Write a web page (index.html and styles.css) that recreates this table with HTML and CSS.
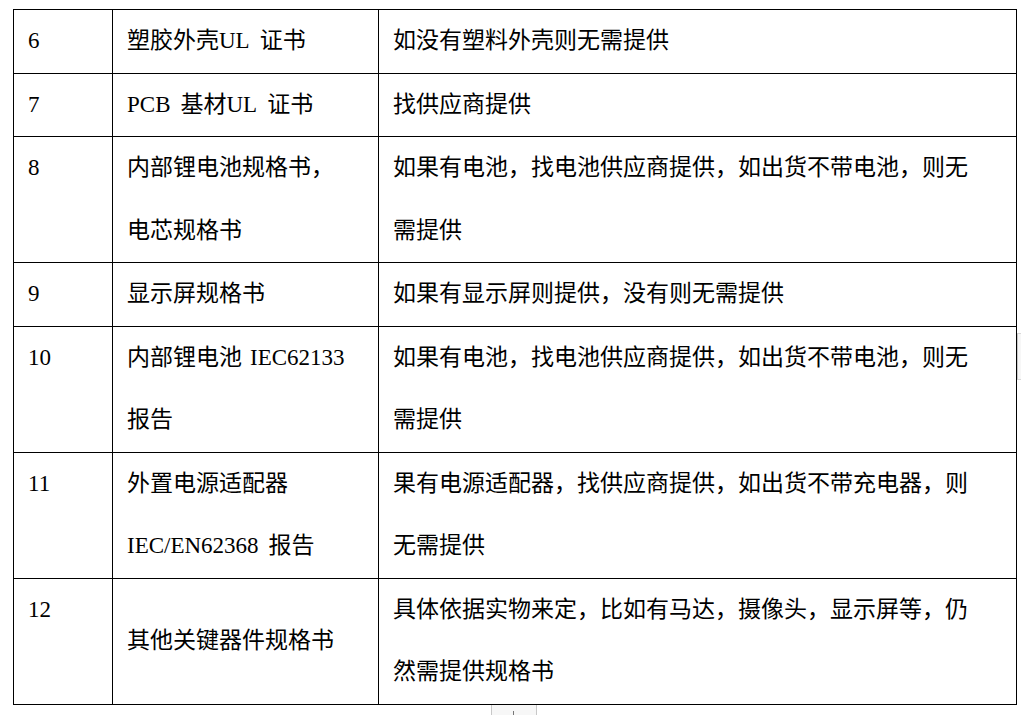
FILE: index.html
```html
<!DOCTYPE html>
<html lang="zh">
<head>
<meta charset="utf-8">
<link rel="stylesheet" href="styles.css">
</head>
<body>
<table class="doc">
  <colgroup>
    <col class="c1"><col class="c2"><col class="c3">
  </colgroup>
  <tr>
    <td>6</td>
    <td>塑胶外壳UL<span class="sp"></span>证书</td>
    <td>如没有塑料外壳则无需提供</td>
  </tr>
  <tr>
    <td>7</td>
    <td>PCB<span class="sp"></span>基材UL<span class="sp"></span>证书</td>
    <td>找供应商提供</td>
  </tr>
  <tr>
    <td>8</td>
    <td><div>内部锂电池规格书，</div><div>电芯规格书</div></td>
    <td><div class="jl">如果有电池，找电池供应商提供，如出货不带电池，则无</div><div>需提供</div></td>
  </tr>
  <tr>
    <td>9</td>
    <td>显示屏规格书</td>
    <td>如果有显示屏则提供，没有则无需提供</td>
  </tr>
  <tr>
    <td>10</td>
    <td><div>内部锂电池<span class="gap"></span>IEC62133</div><div>报告</div></td>
    <td><div class="jl">如果有电池，找电池供应商提供，如出货不带电池，则无</div><div>需提供</div></td>
  </tr>
  <tr>
    <td>11</td>
    <td><div>外置电源适配器</div><div>IEC/EN62368<span class="sp"></span>报告</div></td>
    <td><div class="jl">果有电源适配器，找供应商提供，如出货不带充电器，则</div><div>无需提供</div></td>
  </tr>
  <tr>
    <td>12</td>
    <td class="mid">其他关键器件规格书</td>
    <td><div class="jl">具体依据实物来定，比如有马达，摄像头，显示屏等，仍</div><div>然需提供规格书</div></td>
  </tr>
</table>
<div class="mark-bottom"><span class="tick"></span></div>
<div class="mark-right"></div>
</body>
</html>
```

FILE: styles.css
```css
html, body {
  margin: 0;
  padding: 0;
  background: #ffffff;
}
body {
  width: 1021px;
  height: 715px;
  overflow: hidden;
  position: relative;
  font-family: "Liberation Serif", "Noto Sans CJK SC", serif;
  font-size: 23px;
  font-weight: 400;
  color: #000;
}
.doc {
  margin: 9px 0 0 13px;
  border-collapse: collapse;
  table-layout: fixed;
  width: 1003px;
}
.c1 { width: 99px; }
.c2 { width: 266px; }
.c3 { width: 638px; }
.doc td {
  border: 1px solid #000;
  padding: 0 0 0 14px;
  line-height: 62.5px;
  vertical-align: top;
  white-space: nowrap;
}
.doc td.mid {
  vertical-align: middle;
}
.sp {
  display: inline-block;
  width: 10px;
}
.gap {
  display: inline-block;
  width: 8px;
}
.jl {
  width: 574px;
  text-align: justify;
  text-align-last: justify;
}
.mark-bottom {
  position: absolute;
  left: 491px;
  top: 705px;
  width: 44px;
  height: 12px;
  border-left: 1px solid #c8c8c8;
  border-right: 1px solid #c8c8c8;
  background: #f7f7f7;
}
.mark-bottom .tick {
  position: absolute;
  left: 21px;
  top: 6px;
  width: 1px;
  height: 6px;
  background: #777;
}
.mark-right {
  position: absolute;
  left: 1017px;
  top: 333px;
  width: 4px;
  height: 45px;
  border-left: 1px solid #c8c8c8;
  border-top: 1px solid #d8d8d8;
  border-bottom: 1px solid #d8d8d8;
  background: #f7f7f7;
}
```
